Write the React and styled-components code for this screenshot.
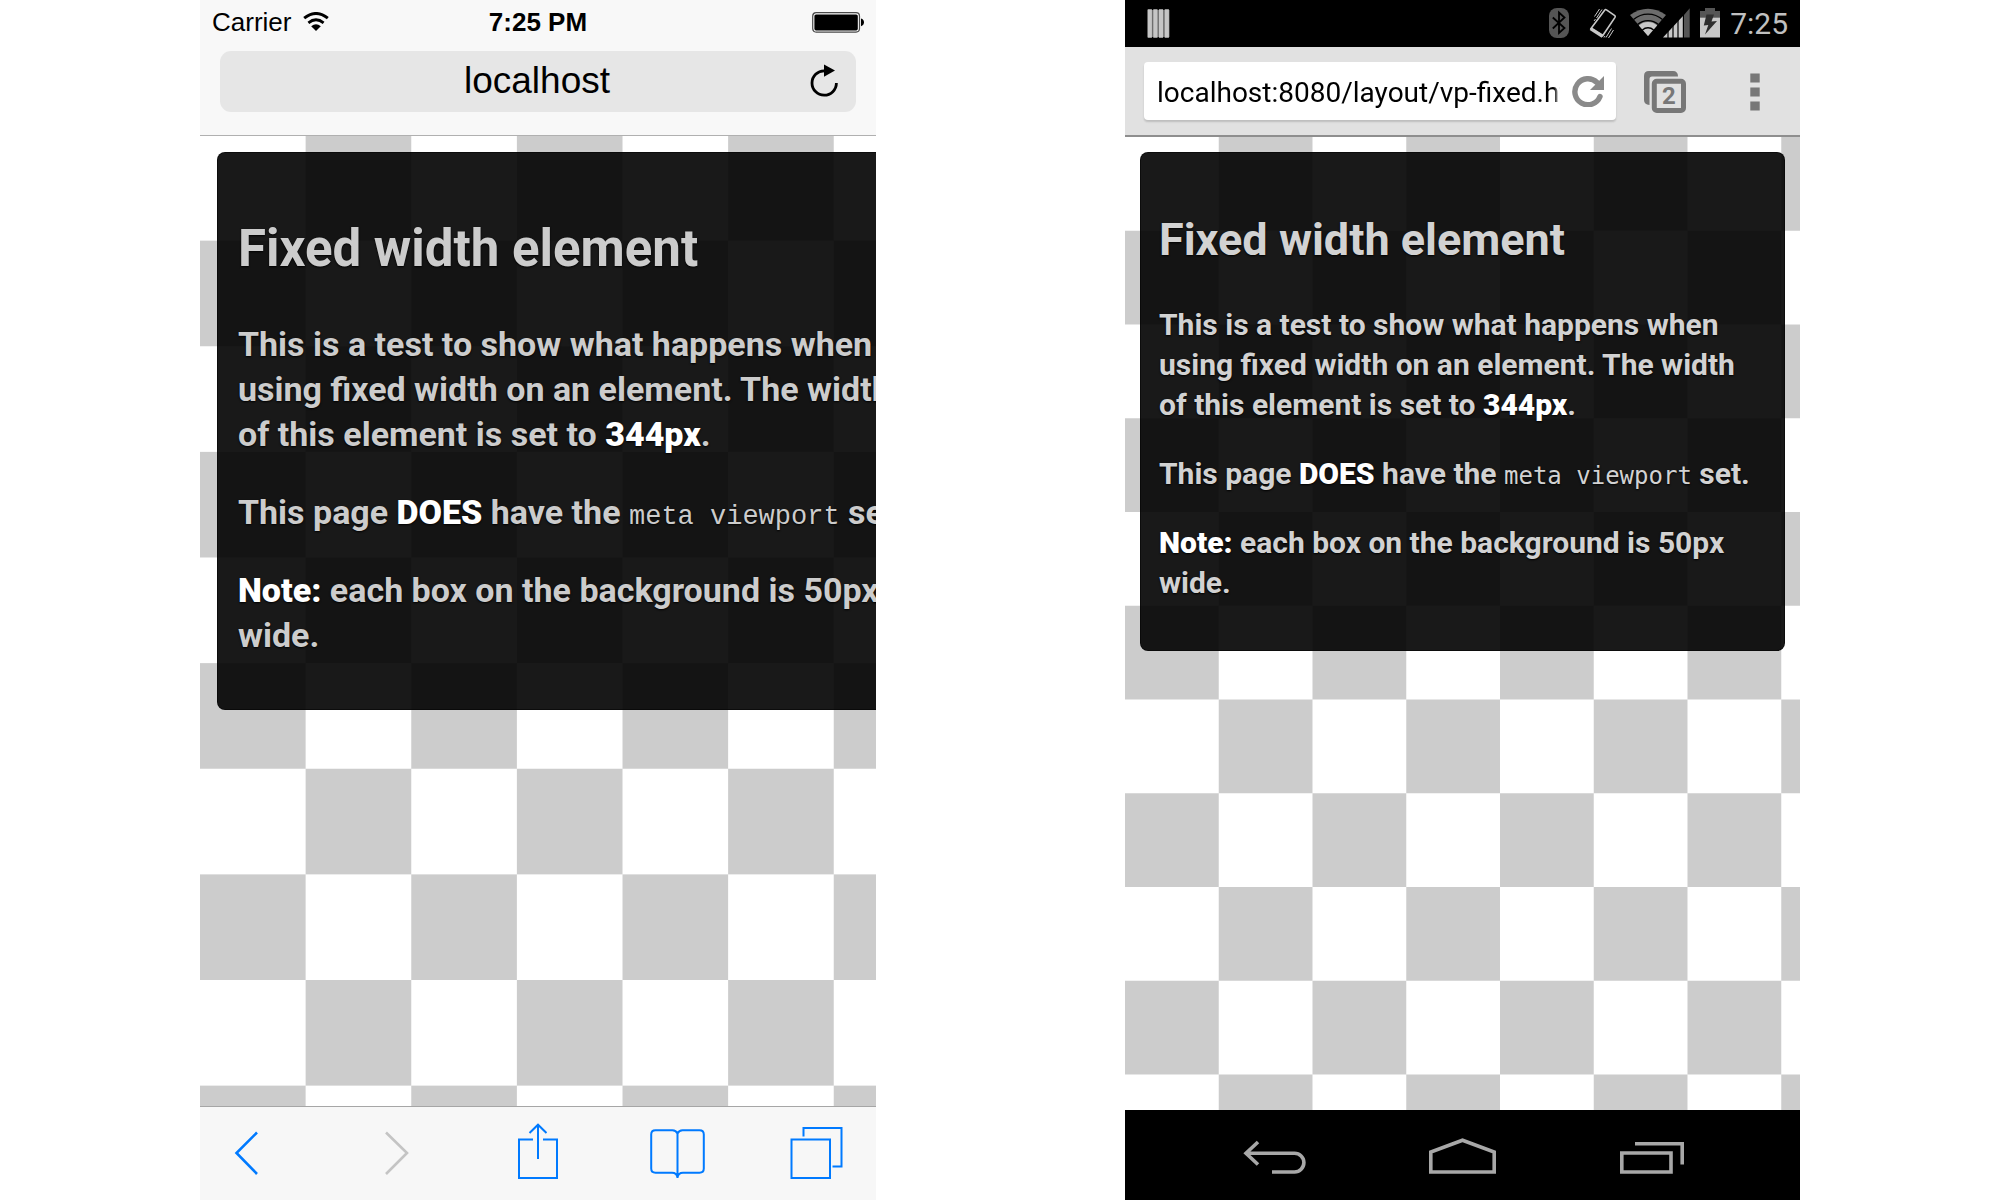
import React from "react";
import styled, { createGlobalStyle, css } from "styled-components";

const GlobalStyle = createGlobalStyle`
  *, *::before, *::after { box-sizing: border-box; }
  body { margin: 0; background: #fff; }
  h2, p { margin: 0; }
  button { padding: 0; border: 0; background: none; display: block; cursor: pointer; }
  input { border: 0; padding: 0; margin: 0; background: none; min-width: 0; outline: none; }
  svg { display: block; }
`;

/* Page */

const Comparison = styled.main`
  display: grid;
  grid-template-columns: 676fr 675fr;
  column-gap: 249px;
  min-height: 100vh;
  padding: 0 10%;
`;

const Phone = styled.section`
  display: flex;
  flex-direction: column;
  min-width: 0;
  overflow: hidden;
  container-type: inline-size;
`;

/* Web page shown in both browsers; $viewport is its width in CSS pixels */

const Checkerboard = styled.div`
  flex: 1;
  padding: ${(p) => p.$inset};
  background-image: conic-gradient(#ccc 25%, #fff 0 50%, #ccc 0 75%, #fff 0);
  background-size: calc(100cqw / ${(p) => p.$viewport} * 100) calc(100cqw / ${(p) => p.$viewport} * 100);
  background-position: 0 ${(p) => p.$shift || "0"};
`;

const small = css`
  --title: 45px;
  --title-line: 53px;
  --title-gap: 39px;
  --text: 30px;
  --text-line: 40px;
  --text-gap: 29px;
  padding: 60px 18px 47px;
`;

const large = css`
  --title: 51px;
  --title-line: 60px;
  --title-gap: 43px;
  --text: 34px;
  --text-line: 45px;
  --text-gap: 33px;
  padding: 66px 20px 51px;
`;

const Card = styled.article`
  width: calc(100cqw / ${(p) => p.$viewport} * 344);
  border: 1px solid rgba(0, 0, 0, 0.5);
  border-radius: 8px;
  background: rgba(0, 0, 0, 0.9);
  color: ${(p) => (p.$large ? "#ccc" : "#d2d2d2")};
  font-family: Roboto, sans-serif;
  font-weight: 700;
  text-shadow: 0 1px 2px #000;
  ${(p) => (p.$large ? large : small)}
`;

const Title = styled.h2`
  margin-bottom: var(--title-gap);
  font-size: var(--title);
  line-height: var(--title-line);
`;

const Paragraph = styled.p`
  font-size: var(--text);
  line-height: var(--text-line);

  & + & {
    margin-top: var(--text-gap);
  }
`;

const Strong = styled.strong`
  color: #fff;
`;

const Code = styled.code`
  font-family: ${(p) => (p.$large ? '"Liberation Mono"' : '"DejaVu Sans Mono"')}, monospace;
  font-size: ${(p) => (p.$large ? "27px" : "24px")};
  font-weight: 400;
  line-height: 1;
`;

function FixedWidthPage({ viewport, large: isLarge, inset, shift }) {
  return (
    <Checkerboard $viewport={viewport} $inset={inset} $shift={shift}>
      <Card $viewport={viewport} $large={isLarge}>
        <Title>Fixed width element</Title>
        <Paragraph>
          This is a test to show what happens when using fixed width on an
          element. The width of this element is set to <Strong>344px</Strong>.
        </Paragraph>
        <Paragraph>
          This page <Strong>DOES</Strong> have the{" "}
          <Code $large={isLarge}>meta viewport</Code> set.
        </Paragraph>
        <Paragraph>
          <Strong>Note:</Strong> each box on the background is 50px wide.
        </Paragraph>
      </Card>
    </Checkerboard>
  );
}

/* iOS chrome */

const IosHeader = styled.header`
  padding: 0 20px 23px;
  border-bottom: 1px solid #b0b0b0;
  background: #f8f8f8;
  color: #000;
  font-family: "Liberation Sans", Arial, sans-serif;
`;

const IosStatus = styled.div`
  display: grid;
  grid-template-columns: 1fr auto 1fr;
  align-items: center;
  margin: 0 -8px 7px;
  font-size: 26px;
  line-height: 44px;
`;

const Carrier = styled.span`
  display: flex;
  align-items: center;
  gap: 12px;
`;

const Clock = styled.time`
  font-weight: 700;
`;

const BatterySlot = styled.span`
  justify-self: end;
`;

const IosAddress = styled.div`
  display: grid;
  grid-template-columns: 1fr 28px;
  align-items: center;
  height: 61px;
  padding: 0 18px 1px 44px;
  border-radius: 11px;
  background: #e6e6e6;
`;

const IosUrl = styled.input`
  height: 60px;
  color: #000;
  font: 37px "Liberation Sans", Arial, sans-serif;
  text-align: center;
`;

const IosToolbar = styled.nav`
  display: flex;
  justify-content: space-between;
  padding: 16px 32px 21px;
  border-top: 1px solid #a6a6a6;
  background: #f7f7f7;
`;

const IosButton = styled.button`
  color: #007aff;

  &:disabled {
    color: #c4c4c4;
  }
`;

const LineIcon = ({ children, width = 2 }) => (
  <svg width="56" height="56" fill="none" stroke="currentColor" strokeWidth={width} aria-hidden="true">
    {children}
  </svg>
);

function IosBrowser() {
  return (
    <Phone aria-label="Safari on iOS">
      <IosHeader>
        <IosStatus>
          <Carrier>
            Carrier
            <svg width="26" height="20" fill="none" stroke="#000" aria-hidden="true">
              <path d="M1.2 6.2Q13 -3.2 24.8 6.2" strokeWidth="3" />
              <path d="M5.4 10.8Q13 4.8 20.6 10.8" strokeWidth="2.8" />
              <path d="M8.2 14.3Q13 10.2 17.8 14.3L13 19Z" fill="#000" stroke="none" />
            </svg>
          </Carrier>
          <Clock>7:25 PM</Clock>
          <BatterySlot>
            <svg width="52" height="21" aria-hidden="true">
              <rect x="0.7" y="0.7" width="46.8" height="19.4" rx="3.5" fill="none" stroke="#4a4a4a" strokeWidth="1.2" />
              <rect x="2.4" y="2.4" width="43.4" height="16" rx="1.6" />
              <path d="M49 6.5Q52 7.5 52 10.3T49 14.2Z" />
            </svg>
          </BatterySlot>
        </IosStatus>
        <IosAddress>
          <IosUrl aria-label="Address" defaultValue="localhost" />
          <button type="button" aria-label="Reload">
            <svg width="28" height="34" aria-hidden="true">
              <path d="M26.4 19A12.2 12.2 0 1 1 14.3 6.8" fill="none" stroke="#000" strokeWidth="2.8" />
              <path d="M14 0.4L25 6.5L14 12.7Z" />
            </svg>
          </button>
        </IosAddress>
      </IosHeader>
      <FixedWidthPage viewport={320} large inset="16px 0 0 17px" shift="-1px" />
      <IosToolbar aria-label="Safari toolbar">
        <IosButton type="button" aria-label="Back">
          <LineIcon width={2.6}>
            <path d="M25 9.5L4.5 30L25 51" />
          </LineIcon>
        </IosButton>
        <IosButton type="button" aria-label="Forward" disabled>
          <LineIcon width={2.6}>
            <path d="M15 9.5L36 30L15 51" />
          </LineIcon>
        </IosButton>
        <IosButton type="button" aria-label="Share">
          <LineIcon>
            <path d="M23 16.5H9V55H47V16.5H33M28 2V36M19.5 10L28 1.7L36.5 10" />
          </LineIcon>
        </IosButton>
        <IosButton type="button" aria-label="Bookmarks">
          <LineIcon>
            <path d="M28.5 10.5C27.5 8.5 26 7.3 23.5 7.3H6.5Q2.2 7.3 2.2 11.5V45.5Q2.2 49.7 6.5 49.7H23C26 49.7 28 51 28.5 54.5C29 51 31 49.7 34 49.7H50.5Q54.8 49.7 54.8 45.5V11.5Q54.8 7.3 50.5 7.3H33.5C31 7.3 29.5 8.5 28.5 10.5V55" />
          </LineIcon>
        </IosButton>
        <IosButton type="button" aria-label="Tabs">
          <LineIcon>
            <path d="M3.5 16.5H42V55H3.5ZM15.5 13.5V5H53.5V43.5H44.5" />
          </LineIcon>
        </IosButton>
      </IosToolbar>
    </Phone>
  );
}

/* Android chrome */

const AndroidStatus = styled.div`
  display: flex;
  align-items: center;
  gap: 10px;
  height: 47px;
  padding: 0 12px 0 22px;
  background: #000;
  color: #c0c0c0;
  font: 30px/47px Roboto, sans-serif;
`;

const Notifications = styled.span`
  flex: 1;
`;

const AndroidToolbar = styled.header`
  display: flex;
  align-items: center;
  padding: 15px 40px 15px 19px;
  border-bottom: 2px solid #8e8e8e;
  background: #e1e1e1;
`;

const Omnibox = styled.div`
  display: flex;
  flex: 1;
  align-items: center;
  gap: 12px;
  height: 58px;
  min-width: 0;
  margin-right: 28px;
  padding: 0 11px 0 13px;
  border-radius: 4px;
  background: #fff;
  box-shadow: 0 2px 2px rgba(0, 0, 0, 0.16);
`;

const AndroidUrl = styled.input`
  flex: 1;
  height: 58px;
  padding-top: 2px;
  color: #000;
  font: 28px Roboto, sans-serif;
  mask-image: linear-gradient(to left, transparent, #000 6px);
`;

const ToolbarButton = styled.button`
  padding-top: 2px;

  & + & {
    margin-left: 64px;
  }
`;

const TabCount = styled.text`
  fill: #777;
  font: 700 24px Roboto, sans-serif;
`;

const AndroidNav = styled.nav`
  display: flex;
  justify-content: center;
  gap: 119px;
  padding: 28px 0 26px;
  background: #000;
`;

const NavIcon = ({ d }) => (
  <svg width="69" height="36" fill="none" stroke="#a8a8a8" strokeWidth="3.6" aria-hidden="true">
    <path d={d} />
  </svg>
);

function AndroidStatusIcons() {
  return (
    <>
      <svg width="27" height="31" aria-hidden="true">
        <rect width="20" height="30" rx="8" fill="#555" />
        <path d="M3.8 9.5L15.5 20L10 25V4.5L15.5 9.5L3.8 20.5" fill="none" stroke="#000" strokeWidth="1.8" />
      </svg>
      <svg width="34" height="31" fill="none" stroke="#c8c8c8" aria-hidden="true">
        <path d="M18.8 2Q19.5 1 20.5 1.8L28.8 7.6Q29.6 8.4 29 9.4L16.6 27.8L5 20.5Z" strokeWidth="1.6" />
        <path d="M4.6 20.6L16.6 28.2" strokeWidth="3.4" />
        <path d="M8.5 8.5L13.5 1M10.5 10L16 1.5M8 13L9.5 11M22.5 30L27.5 22M20 29.5L25.5 20.5M18 29.5L19 28" strokeWidth="1" />
      </svg>
      <svg width="60" height="31" aria-hidden="true">
        <path d="M18 28L0 7Q18 -5.4 36 7Z" fill="#6c6c6c" />
        <path d="M18 28L8.9 17.4A14 14 0 0 1 27.1 17.4Z" fill="#c8c8c8" />
        <path d="M3.5 11.6A22 22 0 0 1 32.5 11.6M7.6 16.6A15.4 15.4 0 0 1 28.4 16.6M12.4 21.9A8.4 8.4 0 0 1 23.6 21.9" fill="none" stroke="#000" strokeWidth="1.3" />
        <path d="M33 29.5L53 8V29.5Z" fill="#c8c8c8" />
        <path d="M54 7L59.7 0.3V29.5H54Z" fill="#555" />
        <path d="M38 20V30M43 15V30M48 10V30M53.4 5V30" stroke="#000" strokeWidth="1.2" />
      </svg>
      <svg width="20" height="31" aria-hidden="true">
        <path d="M5 0H15V3H20V9.5H0V3H5Z" fill="#555" />
        <path d="M0 9.5H20V29.5H0Z" fill="#c8c8c8" />
        <path d="M6.5 6.5L14 6.5L11.5 13.5L17 13L5 26.5L8.3 17L3.8 17.5Z" fill="#2e2e2e" />
      </svg>
    </>
  );
}

function AndroidBrowser() {
  return (
    <Phone aria-label="Chrome on Android">
      <AndroidStatus>
        <Notifications>
          <svg width="23" height="29" aria-hidden="true">
            <path d="M0.5 1H22.5V28H0.5Z" fill="#6e6e6e" />
            <path d="M2.8 0.3V28.7M8.4 0.3V28.7M14 0.3V28.7M19.8 0.3V28.7" stroke="#c6c6c6" strokeWidth="4.2" />
          </svg>
        </Notifications>
        <AndroidStatusIcons />
        <time>7:25</time>
      </AndroidStatus>
      <AndroidToolbar>
        <Omnibox>
          <AndroidUrl aria-label="Address" defaultValue="localhost:8080/layout/vp-fixed.html" />
          <button type="button" aria-label="Reload">
            <svg width="33" height="32" aria-hidden="true">
              <path d="M28 21.5A13 13 0 1 1 25 7.5" fill="none" stroke="#8a8a8a" strokeWidth="5.4" strokeLinecap="round" />
              <path d="M32 1V15H18Z" fill="#8a8a8a" />
            </svg>
          </button>
        </Omnibox>
        <ToolbarButton type="button" aria-label="2 open tabs">
          <svg width="42" height="42">
            <path d="M5.5 34Q0 33.5 0 29V5Q0 0 5 0H29Q34 0 34 5.5H8Q5.5 5.5 5.5 8Z" fill="#777" />
            <rect x="10.3" y="10.3" width="29.2" height="29.2" rx="2.5" fill="none" stroke="#777" strokeWidth="5" />
            <TabCount x="25" y="33" textAnchor="middle">2</TabCount>
          </svg>
        </ToolbarButton>
        <ToolbarButton type="button" aria-label="Menu">
          <svg width="10" height="38" fill="#777" aria-hidden="true">
            <path d="M0.3 0.5H9.7V9.5H0.3ZM0.3 14.5H9.7V23.5H0.3ZM0.3 28.5H9.7V37.5H0.3Z" />
          </svg>
        </ToolbarButton>
      </AndroidToolbar>
      <FixedWidthPage viewport={360} inset="15px 0 0 15px" />
      <AndroidNav aria-label="System navigation">
        <button type="button" aria-label="Back">
          <NavIcon d="M18 4L6 15.2L18 26.5M7 15.2H54.5A9.4 9.4 0 0 1 54.5 34H32" />
        </button>
        <button type="button" aria-label="Home">
          <NavIcon d="M2.8 14V34H66.2V14L34.5 2.2Z" />
        </button>
        <button type="button" aria-label="Recent apps">
          <NavIcon d="M5.8 15H55V34H5.8ZM19 5.7H66.2V26.5" />
        </button>
      </AndroidNav>
    </Phone>
  );
}

export default function App() {
  return (
    <>
      <GlobalStyle />
      <Comparison>
        <IosBrowser />
        <AndroidBrowser />
      </Comparison>
    </>
  );
}
